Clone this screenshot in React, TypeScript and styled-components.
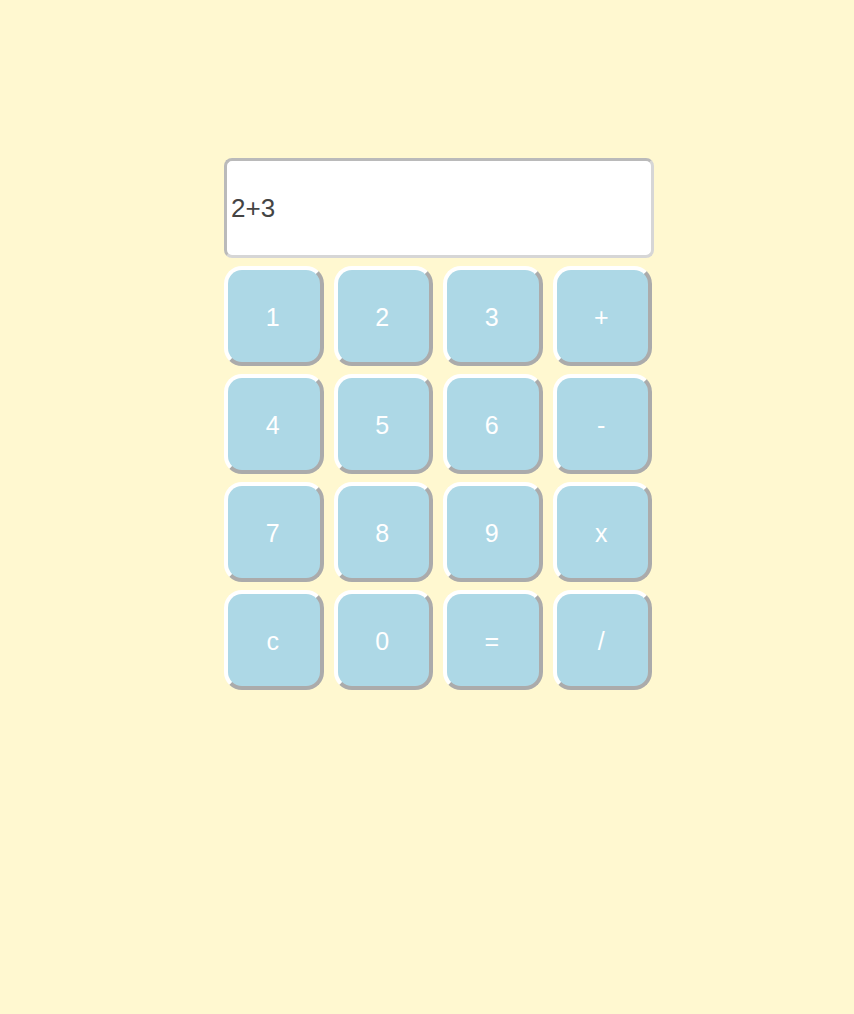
import styled, { createGlobalStyle } from 'styled-components';

const GlobalStyle = createGlobalStyle`
  html, body {
    margin: 0;
    padding: 0;
    background: #fff8d0;
    font-family: "Liberation Sans", Arial, sans-serif;
  }
`;

const Page = styled.div`
  min-height: 1014px;
  display: flex;
  justify-content: center;
  padding: 158px 0 0 24px;
  box-sizing: border-box;
`;

const Calculator = styled.div`
  width: 430px;
  display: flex;
  flex-direction: column;
  gap: 8px;
`;

const Display = styled.div`
  height: 100px;
  box-sizing: border-box;
  background: #fff;
  border: 3px solid;
  border-color: #bababa #d6d6d6 #d6d6d6 #bababa;
  border-radius: 8px;
  display: flex;
  align-items: center;
  padding: 0 4px;
  font-size: 26px;
  color: #444;
`;

const Keys = styled.div`
  width: 428px;
  display: grid;
  grid-template-columns: repeat(4, 1fr);
  column-gap: 10px;
  row-gap: 8px;
`;

const Key = styled.button`
  height: 100px;
  box-sizing: border-box;
  background: #add8e6;
  border: 4px outset #fff;
  border-radius: 18px;
  color: #fff;
  font-family: "Liberation Sans", Arial, sans-serif;
  font-size: 25px;
  padding: 2px 2px 0 0;
  cursor: pointer;
`;

const keys = ['1', '2', '3', '+', '4', '5', '6', '-', '7', '8', '9', 'x', 'c', '0', '=', '/'];

const App: React.FC = () => {
    return (
        <>
            <GlobalStyle />
            <Page>
                <Calculator>
                    <Display>2+3</Display>
                    <Keys>
                        {keys.map((k) => (
                            <Key key={k}>{k}</Key>
                        ))}
                    </Keys>
                </Calculator>
            </Page>
        </>
    );
};

export default App;
